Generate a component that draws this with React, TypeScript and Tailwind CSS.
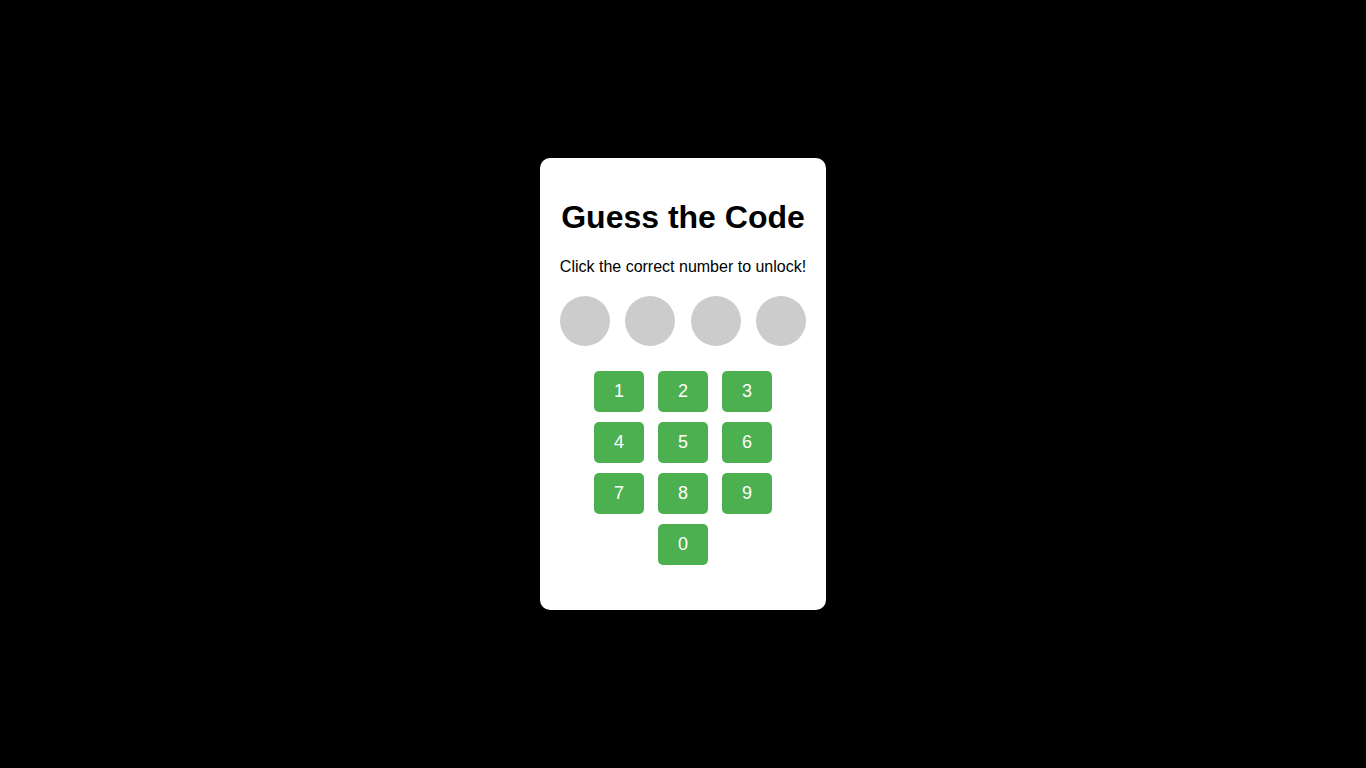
import React from "react";

export default function App() {
  const rows = [["1", "2", "3"], ["4", "5", "6"], ["7", "8", "9"]];
  return (
    <div
      className="flex min-h-screen w-full items-center justify-center bg-black"
      style={{ fontFamily: '"Liberation Sans", Arial, sans-serif' }}
    >
      <div className="flex w-[286px] flex-col items-center rounded-[10px] bg-white p-5 text-center">
        <h1 className="mt-[21.44px] text-[32px] font-bold leading-[36.8px] text-black">Guess the Code</h1>
        <p className="mt-[21.44px] whitespace-nowrap text-[16px] leading-[18.4px] text-black">Click the correct number to unlock!</p>
        <div className="mt-5 flex w-full justify-between">
          {[0, 1, 2, 3].map((i) => (
            <div key={i} className="h-[50px] w-[50px] rounded-full bg-[#cccccc]" />
          ))}
        </div>
        <div className="mt-[25px] mb-[25px] flex flex-col items-center gap-[10px]">
          {rows.map((r, i) => (
            <div key={i} className="flex gap-[14px]">
              {r.map((n) => (
                <button
                  key={n}
                  className="flex h-[41px] w-[50px] items-center justify-center rounded-[5px] bg-[#4caf50] text-[18px] text-white"
                >
                  {n}
                </button>
              ))}
            </div>
          ))}
          <div className="flex">
            <button className="flex h-[41px] w-[50px] items-center justify-center rounded-[5px] bg-[#4caf50] text-[18px] text-white">
              0
            </button>
          </div>
        </div>
      </div>
    </div>
  );
}
